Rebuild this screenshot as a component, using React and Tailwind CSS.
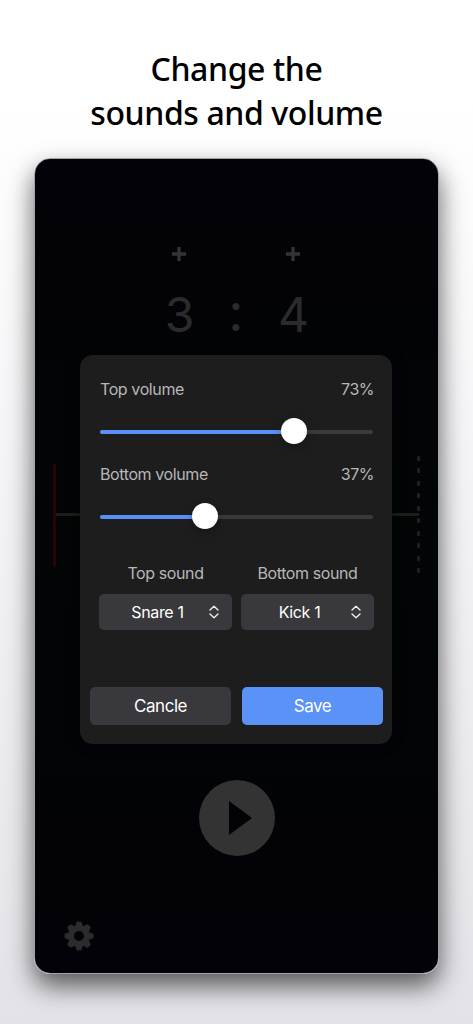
import React, { useState } from "react";

const GEAR_ANGLES = [0, 45, 90, 135, 180, 225, 270, 315];
const TICKS = [0, 1, 2, 3, 4, 5, 6, 7, 8, 9];

const GearIcon = () => (
  <svg viewBox="0 0 30 30" className="w-[30px] h-[30px]" fill="#2b2b2b">
    {GEAR_ANGLES.map((angle) => (
      <path
        key={angle}
        transform={`rotate(${angle} 15 15)`}
        d="M10.9 6 L12.2 1.7 Q12.5 0.5 13.5 0.5 H16.5 Q17.5 0.5 17.8 1.7 L19.1 6 Z"
      />
    ))}
    <circle cx="15" cy="15" r="7.9" fill="none" stroke="#2b2b2b" strokeWidth="5.8" />
  </svg>
);

const PlusIcon = () => (
  <svg viewBox="0 0 14 14" className="w-[14px] h-[14px]">
    <path d="M7 0V14M0 7H14" stroke="#343434" strokeWidth="3.4" />
  </svg>
);

const Stepper = ({ value }) => (
  <div className="w-[57px] flex flex-col items-center">
    <PlusIcon />
    <span className="mt-[24px] h-[59px] text-[48px] leading-[60px] font-normal tracking-[-1px] text-[#2b2b2b]">
      {value}
    </span>
  </div>
);

const VolumeSlider = ({ label, value }) => (
  <div className="h-[85px]">
    <div className="flex justify-between text-[16px] leading-[24px] text-[#b7b7b8]">
      <span className="tracking-[-0.4px]">{label}</span>
      <span className="-mr-[1px] tracking-[-0.5px]">{value}%</span>
    </div>
    <div className="relative mt-[17px] h-[26px] flex items-center">
      <div className="w-full h-1 mt-[2px] rounded-full bg-[#3a3a3d] overflow-hidden">
        <div className="h-full bg-[#5990f5]" style={{ width: `${value}%` }} />
      </div>
      {/* the knob travels inside the track, so its own width is taken off */}
      <div
        className="absolute top-0 w-[26px] h-[26px] rounded-full bg-white shadow-[0_3px_8px_rgba(0,0,0,0.25)]"
        style={{ left: `calc((100% - 26px) * ${value / 100} + 1px)` }}
      />
    </div>
  </div>
);

const SoundSelect = ({ label, value }) => (
  <div className="w-[133px]">
    <p className="text-center text-[16px] leading-[24px] tracking-[-0.4px] text-[#b7b7b8]">
      {label}
    </p>
    <button className="mt-[9px] w-full h-[36px] flex items-center rounded-[5px] bg-[#39383d] text-[16px] tracking-[-0.35px] text-white">
      <span className="flex-1 pl-[7px] text-center">{value}</span>
      <svg viewBox="0 0 10 14" className="w-[10px] h-[14px] mr-[13px]" fill="none">
        <path
          d="M1 5L5 1.2L9 5M1 9L5 12.8L9 9"
          stroke="#eeeeee"
          strokeWidth="1.4"
          strokeLinecap="round"
          strokeLinejoin="round"
        />
      </svg>
    </button>
  </div>
);

const SoundDialog = () => {
  const [topVolume] = useState(73);
  const [bottomVolume] = useState(37);

  return (
    <div className="w-[312px] h-[389px] flex flex-col rounded-[13px] bg-[#1d1d1d] px-[10px] pt-[22px] pb-[19px] shadow-[0_0_12px_rgba(0,0,0,0.6)]">
      <div className="pl-[10px] pr-[9px]">
        <VolumeSlider label="Top volume" value={topVolume} />
        <VolumeSlider label="Bottom volume" value={bottomVolume} />
      </div>
      <div className="mt-[14px] flex gap-[9px] pl-[9px]">
        <SoundSelect label="Top sound" value="Snare 1" />
        <SoundSelect label="Bottom sound" value="Kick 1" />
      </div>
      <div className="mt-auto flex gap-[11px] text-[17px] tracking-[-0.45px] text-white">
        <button className="w-[141px] shrink-0 h-[38px] pt-[1px] rounded-[5px] bg-[#39383d]">
          Cancle
        </button>
        <button className="w-[141px] shrink-0 h-[38px] pt-[1px] rounded-[5px] bg-[#5b92f7]">
          Save
        </button>
      </div>
    </div>
  );
};

const Metronome = () => (
  <div className="h-full flex flex-col items-center pt-[88px] rounded-[15px] bg-linear-to-b from-[#030208] via-[#020606] to-[#030208]">
    <div className="flex pr-[1px]">
      <Stepper value="3" />
      <div className="w-[57px] pt-[32px] text-center text-[57px] leading-[60px] h-[97px] text-[#2b2b2b] font-['Lato',sans-serif]">
        :
      </div>
      <Stepper value="4" />
    </div>

    {/* beat line */}
    <div className="mt-[112px] w-full h-[117px] pl-[18px] pr-[18px] flex items-center">
      <div className="w-[3px] h-[104px] rounded-full bg-[#2c0205]" />
      <div className="flex-1 h-[3px] -mr-[2px] bg-[#1d1e1c]" />
      <div className="w-[3px] h-full flex flex-col justify-between">
        {TICKS.map((tick) => (
          <div key={tick} className="h-[5px] rounded-[1px] bg-[#20211f]" />
        ))}
      </div>
    </div>

    <div className="mt-[207px] w-[76px] h-[76px] flex items-center justify-center rounded-full bg-[#333333]">
      <svg viewBox="0 0 23 34" className="w-[23px] h-[34px] ml-[7px]">
        <path d="M0 0L23 17L0 34Z" fill="#030307" />
      </svg>
    </div>

    <div className="mt-[65px] w-full pl-[29px]">
      <GearIcon />
    </div>
  </div>
);

const App = () => (
  <div className="w-full h-[1024px] overflow-hidden bg-linear-to-b from-white from-10% to-[#e3e2e8] font-['Inter',sans-serif]">
    <h1 className="h-[158px] pt-[47px] text-center text-[32px] leading-[44px] tracking-[-0.4px] font-medium text-black font-['Noto_Sans',sans-serif]">
      Change the
      <br />
      sounds and volume
    </h1>

    <div className="relative mx-auto w-[405px] h-[816px] rounded-[16px] border border-[#a5a5a8] shadow-[0_12px_26px_rgba(0,0,0,0.62)]">
      <Metronome />
      <div className="absolute inset-0 flex justify-center pt-[196px] pr-[1px]">
        <SoundDialog />
      </div>
    </div>
  </div>
);

export default App;
